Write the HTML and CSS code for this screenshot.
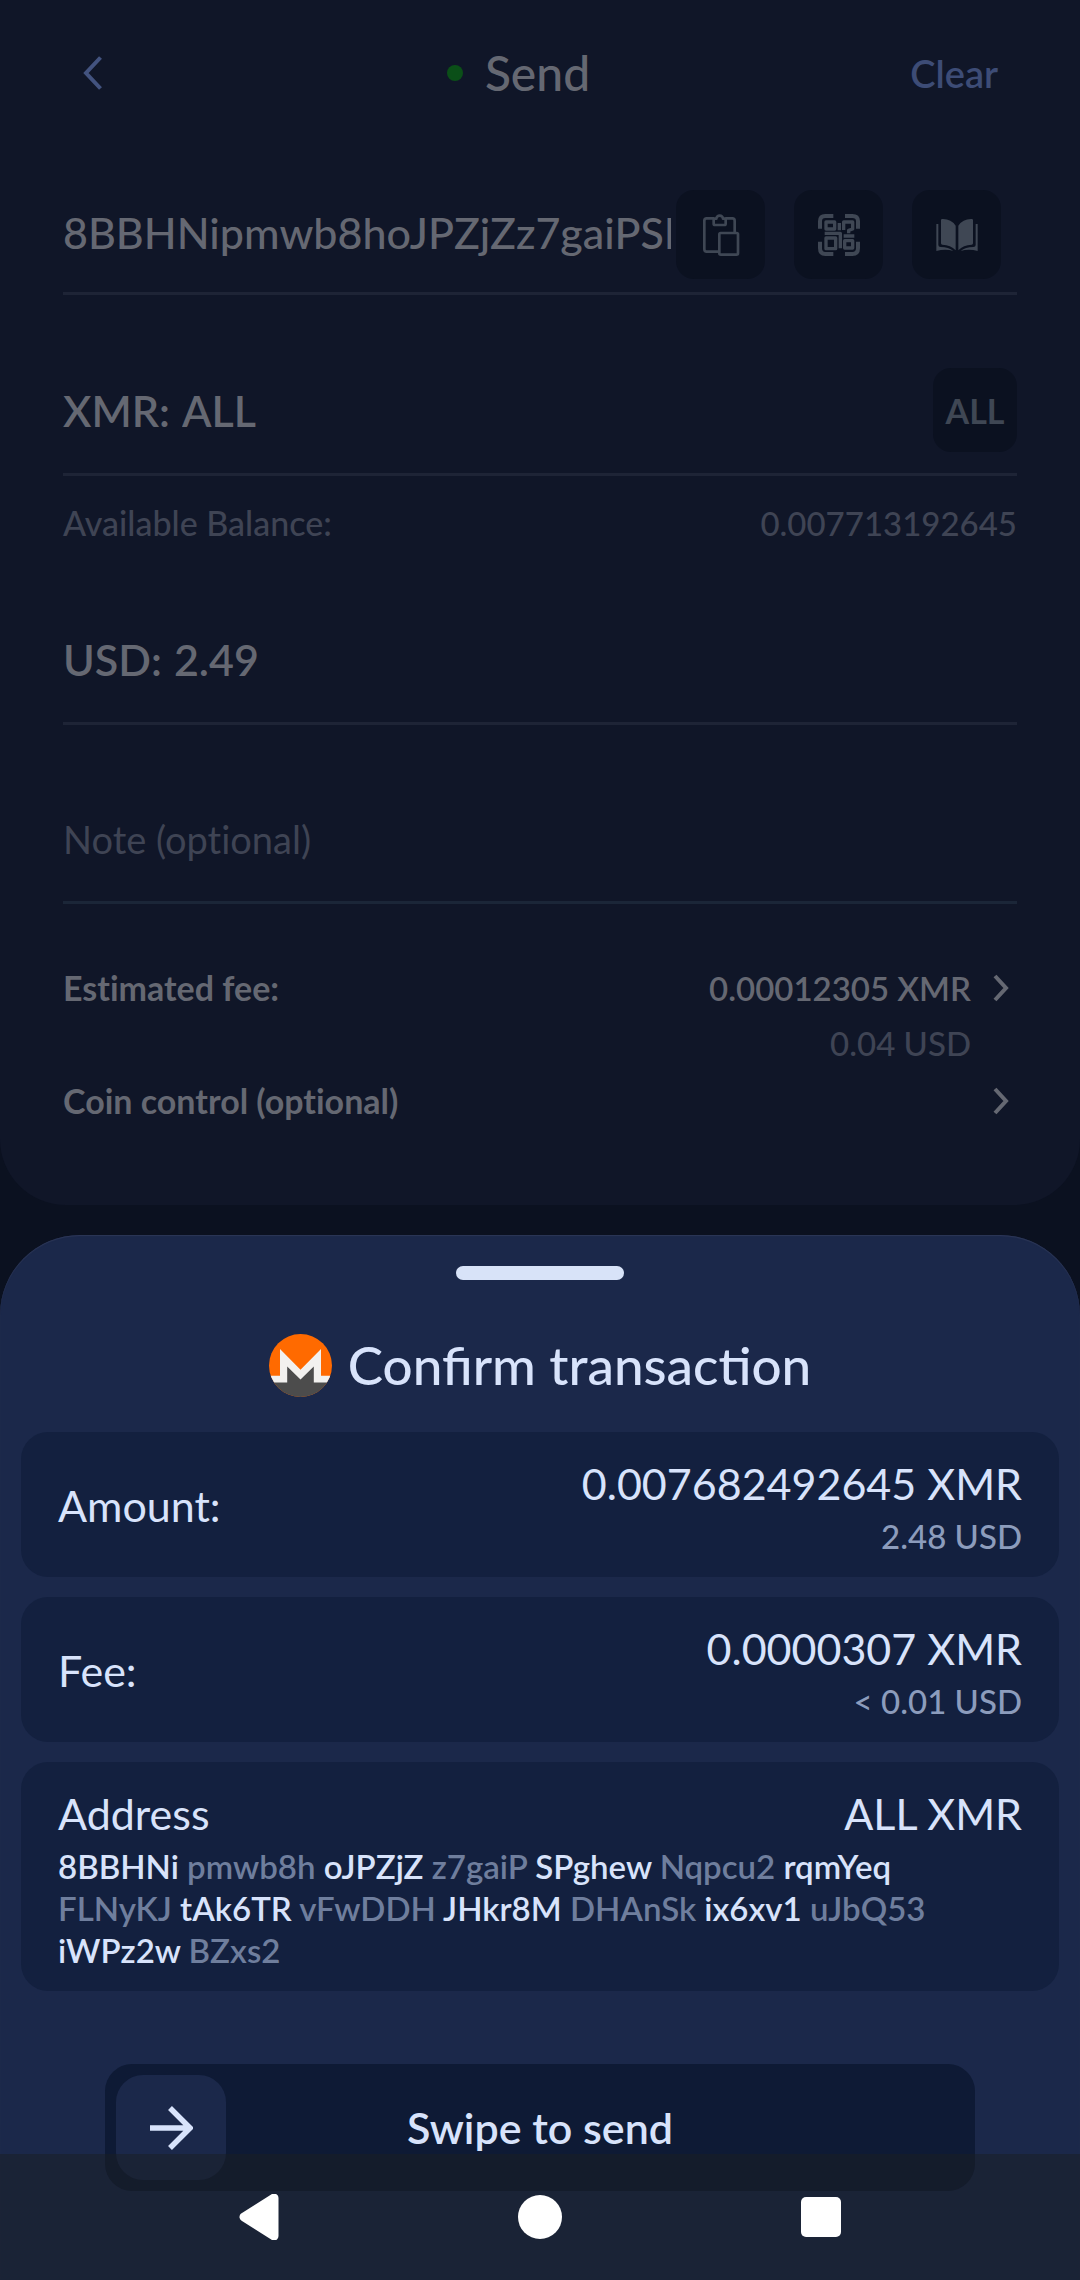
FILE: index.html
```html
<!DOCTYPE html>
<html lang="en">
<head>
<meta charset="utf-8">
<meta name="viewport" content="width=device-width, initial-scale=1">
<title>Send</title>
<link rel="stylesheet" href="styles.css">
</head>
<body>
<div class="screen">
  <main class="send">
    <header class="topbar">
      <button class="back" type="button" aria-label="Back">
        <svg width="20" height="34" viewBox="0 0 20 34"><path d="M17.500 1.500L3 17l14.500 15.500" fill="none" stroke="currentColor" stroke-width="4"/></svg>
      </button>
      <h1 class="title"><span class="dot"></span>Send</h1>
      <button class="clear" type="button">Clear</button>
    </header>

    <form class="form">
      <div class="field field-address">
        <input class="input" type="text" aria-label="Recipient address" value="8BBHNipmwb8hoJPZjZz7gaiPSPghewNqpcu2rqmYeq" readonly>
        <div class="tools">
          <button class="tool" type="button" aria-label="Paste">
            <svg width="42" height="42" viewBox="0 0 126 126" fill="none" stroke="currentColor" stroke-width="8" stroke-linejoin="round"><path d="M41 13H20q-7 0-7 7v86q0 7 7 7h38M77 13h20q7 0 7 7v35M41 14h8a10 9 0 0 1 20 0h8v15q0 4-4 4H45q-4 0-4-4z"/><rect x="58" y="57" width="56" height="65" rx="4"/></svg>
          </button>
          <button class="tool" type="button" aria-label="Scan QR code">
            <svg width="42" height="42" viewBox="0 0 126 126" fill="none" stroke="currentColor"><path stroke-width="12" d="M6 44V22Q6 6 22 6h24M81 6h22q17 0 17 16v22M120 83v20q0 17-17 17H81M46 120H22Q6 120 6 103V83"/><path stroke-width="10" stroke-linejoin="round" d="M24 24h26v21H24zM24 72h29v32H24zM80 80h24v22H80zM77 48V24h27v21l-12 4v9M20 58h47v45M64 27v22M77 66h32"/></svg>
          </button>
          <button class="tool" type="button" aria-label="Address book">
            <svg width="42" height="42" viewBox="0 0 126 126" fill="currentColor"><path d="M15 18q0-3 4-3 26-1 40 20v74Q44 93 19 92q-4 0-4-4zM111 18q0-3-4-3-26-1-40 20v74q15-16 40-17 4 0 4-4zM1 30h6v63q0 6 7 6 24 0 38 12-24-7-51 0zM125 30h-6v63q0 6-7 6-24 0-38 12 24-7 51 0z"/></svg>
          </button>
        </div>
      </div>

      <div class="field">
        <label class="unit" for="xmr">XMR:</label>
        <input class="input strong" id="xmr" type="text" value="ALL">
        <button class="all" type="button">ALL</button>
      </div>
      <div class="balance"><span>Available Balance:</span><span class="balance-value">0.007713192645</span></div>

      <div class="field">
        <label class="unit" for="usd">USD:</label>
        <input class="input strong" id="usd" type="text" value="2.49">
      </div>

      <div class="field field-note">
        <input class="input note" type="text" aria-label="Note" placeholder="Note (optional)">
      </div>

      <div class="option">
        <span class="option-name">Estimated fee:</span>
        <span class="fee"><span>0.00012305 XMR</span><span class="fee-fiat">0.04 USD</span></span>
        <svg class="chevron" width="16" height="28" viewBox="0 0 16 28"><path d="M2 2l11 12L2 26" fill="none" stroke="currentColor" stroke-width="4"/></svg>
      </div>
      <div class="option">
        <span class="option-name">Coin control (optional)</span>
        <svg class="chevron" width="16" height="28" viewBox="0 0 16 28"><path d="M2 2l11 12L2 26" fill="none" stroke="currentColor" stroke-width="4"/></svg>
      </div>
    </form>
  </main>

  <section class="sheet" aria-labelledby="confirm-title">
    <div class="handle"></div>
    <div class="sheet-head">
      <svg width="63" height="63" viewBox="0 0 63 63">
        <clipPath id="coin"><circle cx="31.500" cy="31.500" r="31.500"/></clipPath>
        <g clip-path="url(#coin)"><path fill="#ff6a00" d="M0 0h63v63H0z"/><path fill="#4c4c4c" d="M0 46h63v17H0zM16 28l15.500 14L47 28v20H16z"/><path fill="#f2f1ef" d="M0 41.700h11V15l20.500 20.700L52 15v26.700h11v6.700H44.800V32.500L31.500 45.500 18.200 32.500v15.900H0z"/></g>
      </svg>
      <h2 class="sheet-title" id="confirm-title">Confirm transaction</h2>
    </div>

    <div class="cards">
      <div class="card card-split">
        <span class="card-label">Amount:</span>
        <div class="values"><span>0.007682492645 XMR</span><span class="fiat">2.48 USD</span></div>
      </div>
      <div class="card card-split">
        <span class="card-label">Fee:</span>
        <div class="values"><span>0.0000307 XMR</span><span class="fiat">&lt; 0.01 USD</span></div>
      </div>
      <div class="card">
        <div class="card-row"><span>Address</span><span>ALL XMR</span></div>
        <p class="address"><b>8BBHNi</b> pmwb8h <b>oJPZjZ</b> z7gaiP <b>SPghew</b> Nqpcu2 <b>rqmYeq</b><br>FLNyKJ <b>tAk6TR</b> vFwDDH <b>JHkr8M</b> DHAnSk <b>ix6xv1</b> uJbQ53<br><b>iWPz2w</b> BZxs2</p>
      </div>
    </div>

    <div class="swipe">
      <button class="thumb" type="button" aria-label="Swipe to send">
        <svg width="44" height="44" viewBox="0 0 44 44"><path d="M1 22h39M21 2l20 20-20 20" fill="none" stroke="currentColor" stroke-width="5.500"/></svg>
      </button>
      <span class="swipe-text">Swipe to send</span>
    </div>
  </section>
</div>

<nav class="system-nav" aria-label="System">
  <button type="button" aria-label="Back"><svg width="44" height="46" viewBox="0 0 44 46"><path d="M7 23L37 4v38z" fill="#fff" stroke="#fff" stroke-width="9" stroke-linejoin="round"/></svg></button>
  <button type="button" aria-label="Home"><svg width="44" height="46" viewBox="0 0 44 46"><circle cx="22" cy="23" r="22" fill="#fff"/></svg></button>
  <button type="button" aria-label="Recent apps"><svg width="44" height="46" viewBox="0 0 44 46"><rect x="2" y="3" width="40" height="40" rx="5" fill="#fff"/></svg></button>
</nav>
</body>
</html>
```
FILE: styles.css
```css
* {
  box-sizing: border-box;
}

body {
  margin: 0;
  background: #0b1120;
  font-family: Lato, "Liberation Sans", sans-serif;
  font-variant-ligatures: none;
}

button,
input {
  margin: 0;
  padding: 0;
  border: 0;
  background: none;
  color: inherit;
  font: inherit;
  font-variant-ligatures: none;
}

svg {
  display: block;
}

.screen {
  display: flex;
  flex-direction: column;
  min-height: 100vh;
}

/* Send form, dimmed behind the sheet */

.send {
  padding: 0 63px 83px;
  border-radius: 0 0 66px 66px;
  background: #101628;
  color: #656872;
}

.topbar {
  display: grid;
  grid-template-columns: 1fr auto 1fr;
  align-items: center;
  height: 146px;
  padding: 0 19px 0 20px;
}

.back {
  justify-self: start;
  color: #43537f;
}

.title {
  display: flex;
  align-items: center;
  gap: 22px;
  margin: 0;
  padding-right: 44px;
  font-size: 48px;
  font-weight: 500;
  line-height: 58px;
}

.dot {
  width: 16px;
  height: 16px;
  border-radius: 50%;
  background: #0b4f18;
}

.clear {
  justify-self: end;
  color: #3d4c76;
  font-size: 38px;
  font-weight: 600;
}

.field {
  display: flex;
  align-items: center;
  gap: 12px;
  padding: 73px 0 21px;
  border-bottom: 3px solid #1e2436;
  font-size: 43px;
}

.field-address {
  gap: 5px;
  padding: 44px 16px 13px 0;
}

.field-note {
  border-color: #1b2638;
}

.input {
  flex: 1;
  min-width: 0;
  height: 84px;
  outline: 0;
}

.field-address .input {
  padding-bottom: 4px;
  font-weight: 500;
}

.unit,
.strong {
  font-weight: 600;
}

.note {
  height: 82px;
  font-size: 38px;
}

.note::placeholder {
  color: #3f4454;
  opacity: 1;
}

.tools {
  display: flex;
  gap: 29px;
}

.tool,
.all {
  display: grid;
  place-items: center;
  border-radius: 18px;
  background: #0b1120;
  color: #3f4754;
}

.tool {
  width: 89px;
  height: 89px;
}

.all {
  width: 84px;
  height: 84px;
  font-size: 34px;
  font-weight: 700;
}

.balance {
  display: flex;
  justify-content: space-between;
  margin-top: 26px;
  color: #3f4454;
  font-size: 34px;
  font-weight: 500;
  line-height: 42px;
}

.balance-value {
  font-size: 33px;
}

.option {
  display: flex;
  align-items: flex-start;
  margin-top: 16px;
  padding-right: 8px;
  font-size: 34px;
  line-height: 42px;
}

.field-note + .option {
  margin-top: 63px;
}

.option-name {
  flex: 1;
  font-weight: 700;
}

.fee {
  display: flex;
  flex-direction: column;
  gap: 13px;
  margin-right: 22px;
  text-align: right;
  font-size: 33px;
  font-weight: 600;
}

.fee-fiat {
  color: #3f4454;
  font-weight: 500;
}

.chevron {
  margin-top: 7px;
}

/* Confirmation sheet */

.sheet {
  display: flex;
  flex: 1;
  flex-direction: column;
  margin-top: 30px;
  padding: 31px 21px 89px;
  border-radius: 80px 80px 0 0;
  background: #1b284a;
  box-shadow: inset 0 1px 1px #2d3757;
  color: #d8e3fb;
  font-size: 43px;
  line-height: 53px;
}

.handle {
  align-self: center;
  width: 168px;
  height: 14px;
  border-radius: 7px;
  background: #d8e3f8;
}

.sheet-head {
  display: flex;
  align-items: center;
  justify-content: center;
  gap: 16px;
  height: 64px;
  margin: 53px 0 35px;
}

.sheet-title {
  margin: 0;
  font-size: 53px;
  font-weight: 500;
  line-height: 64px;
  font-variant-ligatures: normal;
}

.cards {
  display: flex;
  flex-direction: column;
  gap: 20px;
}

.card {
  display: flex;
  flex-direction: column;
  gap: 5px;
  padding: 25px 37px 20px;
  border-radius: 27px;
  background: #13203f;
}

.card-split,
.card-row {
  display: flex;
  flex-direction: row;
  align-items: center;
  justify-content: space-between;
}

.card-label {
  padding-bottom: 4px;
}

.values {
  display: flex;
  flex-direction: column;
  gap: 5px;
  text-align: right;
}

.fiat {
  color: #8c9cbc;
  font-size: 33px;
  font-weight: 500;
  line-height: 42px;
}

.address {
  margin: 0;
  color: #6f7e9d;
  font-size: 33px;
  font-weight: 600;
  line-height: 42px;
}

.address b {
  color: #d8e3fb;
  font-weight: 600;
}

.swipe {
  display: grid;
  grid-template-columns: 1fr;
  align-items: center;
  margin: 73px 84px 0;
  padding: 11px;
  border-radius: 27px;
  background: #0e1a35;
  font-weight: 600;
}

.thumb,
.swipe-text {
  grid-area: 1 / 1;
}

.thumb {
  display: grid;
  place-items: center;
  width: 110px;
  height: 105px;
  border-radius: 27px;
  background: #1b284a;
}

.swipe-text {
  justify-self: center;
}

/* Translucent system bar laid over the sheet */

.system-nav {
  position: fixed;
  right: 0;
  bottom: 0;
  left: 0;
  display: flex;
  align-items: center;
  justify-content: center;
  gap: 237px;
  height: 126px;
  background: rgba(26, 29, 34, 0.5);
}
```
